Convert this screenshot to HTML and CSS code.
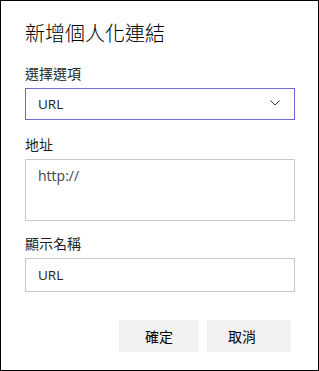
FILE: index.html
```html
<!DOCTYPE html>
<html lang="zh-Hant">
<head>
<meta charset="utf-8">
<link rel="stylesheet" href="styles.css">
</head>
<body>
<div class="dialog">
  <div class="title">新增個人化連結</div>
  <div class="label">選擇選項</div>
  <div class="select">
    <span class="value">URL</span>
    <svg class="chev" width="10" height="6" viewBox="0 0 10 6"><path d="M0.5 0.5 L5 5 L9.5 0.5" fill="none" stroke="#333" stroke-width="1"/></svg>
  </div>
  <div class="label gap">地址</div>
  <div class="textarea">http://</div>
  <div class="label gap2">顯示名稱</div>
  <div class="input">URL</div>
  <div class="actions">
    <div class="btn ok">確定</div>
    <div class="btn cancel">取消</div>
  </div>
</div>
</body>
</html>
```
FILE: styles.css
```css
html, body { margin: 0; padding: 0; background: #fff; }
.dialog {
  box-sizing: border-box;
  width: 319px;
  height: 371px;
  border: 1px solid #000;
  padding: 19px 23px 0 24px;
  display: flex;
  flex-direction: column;
  font-family: "Open Sans", "Noto Sans CJK TC", sans-serif;
  color: #201f1e;
}
.title {
  font-size: 20px;
  line-height: 28px;
  height: 28px;
  color: #000;
  font-weight: 300;
}
.label {
  margin-top: 16px;
  font-size: 14px;
  line-height: 20px;
  height: 20px;
  margin-bottom: 4px;
  color: #201f1e;
}
.label.gap { margin-top: 15px; }
.label.gap2 { margin-top: 13px; }
.select {
  box-sizing: border-box;
  height: 32px;
  border: 1px solid #6f6bd6;
  display: flex;
  align-items: center;
  justify-content: space-between;
  padding: 0 14px 0 12px;
}
.value, .input {
  font-size: 13.5px;
  color: #222;
}
.chev { display: block; margin-top: -2px; }
.textarea {
  box-sizing: border-box;
  height: 62px;
  border: 1px solid #c8c8c8;
  padding: 6px 12px;
  font-size: 14px;
  line-height: 20px;
  color: #444;
}
.input {
  box-sizing: border-box;
  height: 34px;
  border: 1px solid #c8c8c8;
  padding: 0 12px;
  display: flex;
  align-items: center;
}
.actions {
  margin-top: 28px;
  display: flex;
  justify-content: flex-end;
  gap: 8px;
  padding-right: 4px;
}
.btn {
  box-sizing: border-box;
  height: 32px;
  background: #f3f2f1;
  font-size: 14px;
  line-height: 32px;
  color: #000;
  font-family: "Noto Sans CJK TC", sans-serif;
}
.btn.ok { width: 80px; text-align: center; }
.btn.cancel { width: 84px; padding-left: 21px; }
```
